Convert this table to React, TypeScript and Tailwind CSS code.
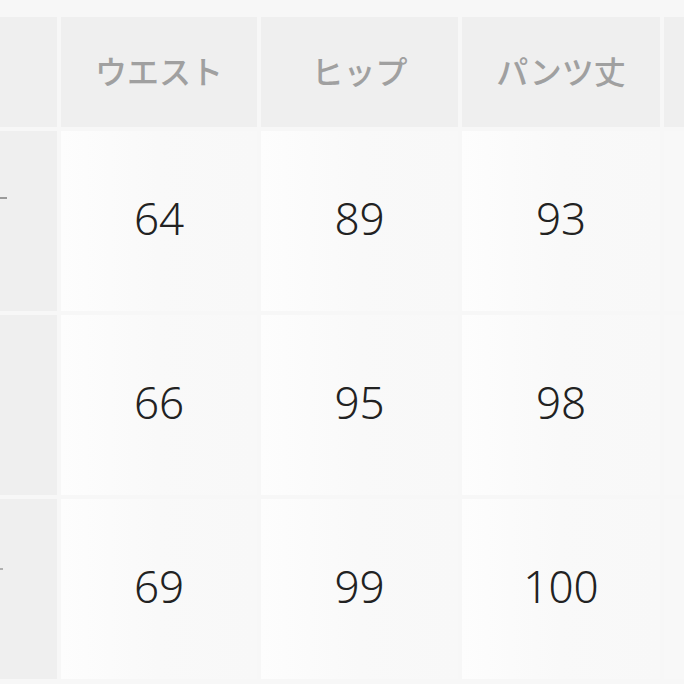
import React from "react";

const headers = ["ウエスト", "ヒップ", "パンツ丈"];
const rows = [
  ["64", "89", "93"],
  ["66", "95", "98"],
  ["69", "99", "100"],
];

export default function App() {
  return (
    <div className="w-[684px] h-[684px] overflow-hidden bg-[#f7f7f7] pt-[17px]">
      <div className="grid grid-cols-[57px_196px_197px_198px_60px] grid-rows-[110px_180px_180px_180px] gap-x-[4px] gap-y-[4px]">
        {/* header row */}
        <div className="bg-[#efefef]" />
        {headers.map((h) => (
          <div
            key={h}
            className="bg-[#efefef] flex items-center justify-center pb-[4px] text-[32px] font-medium text-[#a0a0a0] font-['Noto_Sans_CJK_JP',sans-serif]"
          >
            {h}
          </div>
        ))}
        <div className="bg-[#efefef]" />

        {/* body rows */}
        {rows.map((r, i) => (
          <React.Fragment key={i}>
            <div className="bg-[#efefef] flex items-center">
              {/* clipped label from the left edge */}
              {i !== 1 && (
                <div className={i === 0 ? "mb-[46px] w-[7px] h-[2px] bg-[#9a9a9a]" : "mb-[40px] w-[3px] h-[2px] bg-[#b0b0b0]"} />
              )}
            </div>
            {r.map((v, j) => (
              <div
                key={j}
                className="bg-gradient-to-r from-[#fdfdfd] via-[#f9f9f9] to-[#f8f8f8] flex items-center justify-center pb-[6px] text-[44px] font-light text-[#222222] font-['Noto_Sans',sans-serif]"
              >
                {v}
              </div>
            ))}
            <div className="bg-[#f8f8f8]" />
          </React.Fragment>
        ))}
      </div>
    </div>
  );
}
